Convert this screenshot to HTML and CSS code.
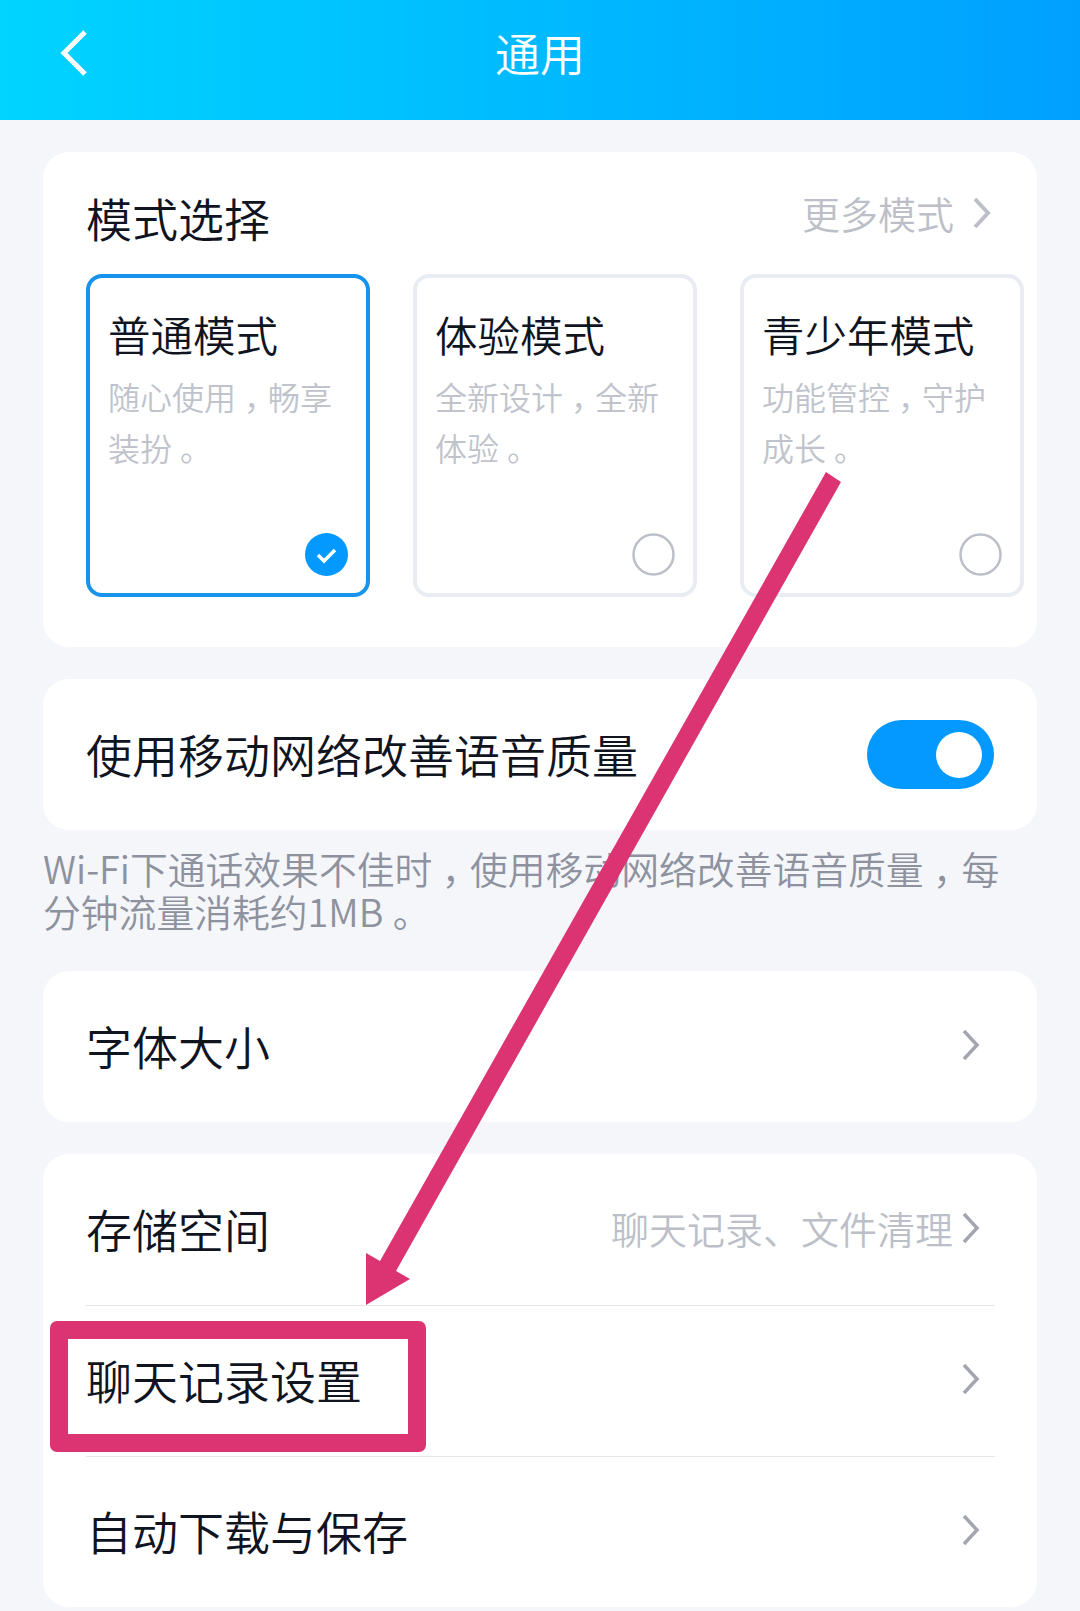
FILE: index.html
```html
<!DOCTYPE html>
<html lang="zh-CN">
<head>
  <meta charset="UTF-8">
  <meta name="viewport" content="width=device-width, initial-scale=1.0">
  <title>通用</title>
  <link rel="stylesheet" href="styles.css">
</head>
<body>
  <header class="topbar">
    <svg class="back" width="30" height="48" viewBox="0 0 30 48"><path d="M26 3 L5 24 L26 45" fill="none" stroke="#fff" stroke-width="5"/></svg>
    <h1>通用</h1>
  </header>

  <section class="card modes">
    <div class="modes-head">
      <h2>模式选择</h2>
      <a class="more">更多模式
        <svg class="chev" width="20" height="32" viewBox="0 0 20 32"><path d="M3 2 L16 16 L3 30" fill="none" stroke="#bcbfc8" stroke-width="4"/></svg>
      </a>
    </div>
    <div class="mode-list">
      <div class="mode active">
        <h3>普通模式</h3>
        <p><span class="line">随心使用<span class="punct">，</span>畅享</span><span class="line">装扮<span class="punct">。</span></span></p>
        <svg class="radio" width="43" height="43" viewBox="0 0 43 43"><circle cx="21.5" cy="21.5" r="21.5" fill="#0399ff"/><path d="M13 22 L19 28 L30 17" fill="none" stroke="#fff" stroke-width="3.5"/></svg>
      </div>
      <div class="mode">
        <h3>体验模式</h3>
        <p><span class="line">全新设计<span class="punct">，</span>全新</span><span class="line">体验<span class="punct">。</span></span></p>
        <svg class="radio" width="43" height="43" viewBox="0 0 43 43"><circle cx="21.5" cy="21.5" r="20" fill="none" stroke="#bcbfc8" stroke-width="2.5"/></svg>
      </div>
      <div class="mode">
        <h3>青少年模式</h3>
        <p><span class="line">功能管控<span class="punct">，</span>守护</span><span class="line">成长<span class="punct">。</span></span></p>
        <svg class="radio" width="43" height="43" viewBox="0 0 43 43"><circle cx="21.5" cy="21.5" r="20" fill="none" stroke="#bcbfc8" stroke-width="2.5"/></svg>
      </div>
    </div>
  </section>

  <section class="card">
    <div class="row">
      <span>使用移动网络改善语音质量</span>
      <div class="toggle"><div class="knob"></div></div>
    </div>
  </section>
  <p class="note"><span class="line">Wi-Fi下通话效果不佳时<span class="punct">，</span>使用移动网络改善语音质量<span class="punct">，</span>每</span><span class="line">分钟流量消耗约1MB<span class="punct">。</span></span></p>

  <section class="card">
    <div class="row">
      <span>字体大小</span>
      <svg class="chev row-chev" width="20" height="32" viewBox="0 0 20 32"><path d="M3 2 L16 16 L3 30" fill="none" stroke="#a3a6b0" stroke-width="3.5"/></svg>
    </div>
  </section>

  <section class="card list">
    <div class="row">
      <span>存储空间</span>
      <span class="row-right">聊天记录、文件清理
        <svg class="chev row-chev" width="20" height="32" viewBox="0 0 20 32"><path d="M3 2 L16 16 L3 30" fill="none" stroke="#a3a6b0" stroke-width="3.5"/></svg>
      </span>
    </div>
    <div class="row">
      <span>聊天记录设置</span>
      <svg class="chev row-chev" width="20" height="32" viewBox="0 0 20 32"><path d="M3 2 L16 16 L3 30" fill="none" stroke="#a3a6b0" stroke-width="3.5"/></svg>
    </div>
    <div class="row">
      <span>自动下载与保存</span>
      <svg class="chev row-chev" width="20" height="32" viewBox="0 0 20 32"><path d="M3 2 L16 16 L3 30" fill="none" stroke="#a3a6b0" stroke-width="3.5"/></svg>
    </div>
  </section>

  <!-- annotation drawn over the screenshot -->
  <div class="mark-box"></div>
  <svg class="mark-arrow" width="1080" height="1611" viewBox="0 0 1080 1611"><polygon points="826,472 841,482 396,1271 410,1279 366,1305 366,1253 380,1261" fill="#dc3473"/></svg>
</body>
</html>
```

FILE: styles.css
```css
* {
  box-sizing: border-box;
}

body {
  margin: 0;
  width: 1080px;
  height: 1611px;
  overflow: hidden;
  position: relative;
  background: #f4f6fa;
  color: #10141f;
  font-family: "Noto Sans CJK SC", "Noto Sans", sans-serif;
  font-weight: 350;
}

h1, h2, h3, p {
  margin: 0;
  font-weight: 350;
}

.line {
  display: block;
  white-space: nowrap;
}

/* centred full-width punctuation, as on the phone */
.punct {
  padding: 0 0.25em;
  font-feature-settings: "halt";
}

.topbar {
  height: 120px;
  margin-bottom: 32px;
  padding-bottom: 16px;
  display: flex;
  align-items: center;
  justify-content: center;
  position: relative;
  background: linear-gradient(to right, #00d4ff, #00a0ff);
}

.topbar h1 {
  font-size: 45px;
  color: #fff;
}

.back {
  position: absolute;
  left: 59px;
  top: 29px;
}

.card {
  margin: 0 43px 32px;
  background: #fff;
  border-radius: 26px;
}

.modes {
  padding: 0 13px 50px 43px;
}

.modes-head {
  height: 122px;
  padding: 42px 32px 0 0;
  display: flex;
  justify-content: space-between;
  align-items: flex-start;
}

.modes-head h2 {
  font-size: 46px;
  line-height: 46px;
}

.more {
  display: flex;
  align-items: center;
  gap: 18px;
  margin-top: -4px;
  font-size: 38px;
  line-height: 46px;
  color: #bcbfc8;
}

.mode-list {
  display: flex;
  gap: 43px;
}

.mode {
  flex: 0 0 284px;
  height: 323px;
  padding: 27px 18px 0;
  position: relative;
  border: 4px solid #e9ecf3;
  border-radius: 16px;
}

.mode.active {
  border-color: #1893eb;
}

.mode h3 {
  font-size: 42.5px;
  line-height: 58px;
}

.mode p {
  margin-top: 8px;
  font-size: 32px;
  line-height: 50.5px;
  color: #c0c3cb;
}

.radio {
  position: absolute;
  right: 18px;
  bottom: 17px;
}

.row {
  height: 151px;
  padding: 0 43px 4px;
  display: flex;
  align-items: center;
  justify-content: space-between;
  font-size: 46px;
}

.toggle {
  width: 127px;
  height: 69px;
  margin-top: 4px;
  padding: 12px 12px 0 0;
  display: flex;
  justify-content: flex-end;
  border-radius: 35px;
  background: #0399ff;
}

.knob {
  width: 46px;
  height: 46px;
  border-radius: 50%;
  background: #fff;
}

.note {
  margin: -16px 43px 39px;
  font-size: 37.8px;
  line-height: 43px;
  color: #8e929e;
}

.list {
  padding: 0;
}

.list .row {
  position: relative;
}

.list .row + .row::before {
  content: "";
  position: absolute;
  left: 43px;
  right: 42px;
  top: 0;
  height: 1px;
  background: #e6e7ec;
}

.row-right {
  display: flex;
  align-items: center;
  gap: 8px;
  font-size: 38px;
  color: #bcbfc8;
}

.row-chev {
  margin-right: 13px;
}

.mark-box {
  position: absolute;
  left: 50px;
  top: 1321px;
  width: 376px;
  height: 131px;
  border: 18px solid #dc3473;
  border-radius: 7px;
}

.mark-arrow {
  position: absolute;
  left: 0;
  top: 0;
}
```
